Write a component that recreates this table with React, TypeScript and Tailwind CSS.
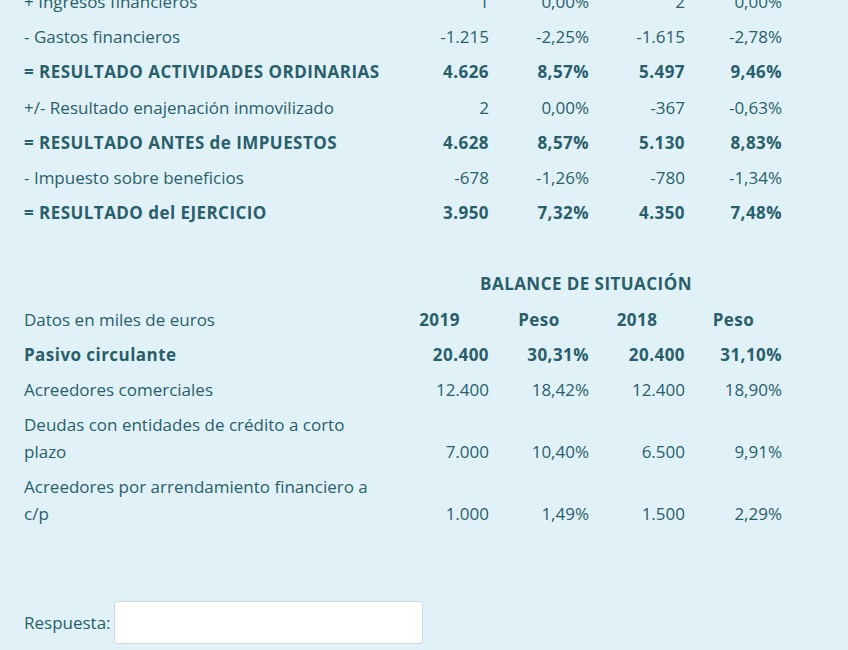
import React from "react";

type Row = { label: React.ReactNode; v: string[]; bold?: boolean };

const top: Row[] = [
  { label: "+ Ingresos financieros", v: ["1", "0,00%", "2", "0,00%"] },
  { label: "- Gastos financieros", v: ["-1.215", "-2,25%", "-1.615", "-2,78%"] },
  { label: "= RESULTADO ACTIVIDADES ORDINARIAS", v: ["4.626", "8,57%", "5.497", "9,46%"], bold: true },
  { label: "+/- Resultado enajenación inmovilizado", v: ["2", "0,00%", "-367", "-0,63%"] },
  { label: "= RESULTADO ANTES de IMPUESTOS", v: ["4.628", "8,57%", "5.130", "8,83%"], bold: true },
  { label: "- Impuesto sobre beneficios", v: ["-678", "-1,26%", "-780", "-1,34%"] },
  { label: "= RESULTADO del EJERCICIO", v: ["3.950", "7,32%", "4.350", "7,48%"], bold: true },
];

const balance: Row[] = [
  { label: "Pasivo circulante", v: ["20.400", "30,31%", "20.400", "31,10%"], bold: true },
  { label: "Acreedores comerciales", v: ["12.400", "18,42%", "12.400", "18,90%"] },
  {
    label: (
      <>
        Deudas con entidades de crédito a corto
        <br />
        plazo
      </>
    ),
    v: ["7.000", "10,40%", "6.500", "9,91%"],
  },
  {
    label: (
      <>
        Acreedores por arrendamiento financiero a
        <br />
        c/p
      </>
    ),
    v: ["1.000", "1,49%", "1.500", "2,29%"],
  },
];

const grid = "grid grid-cols-[366px_99px_100px_96px_97px] items-end";
const B = "font-bold tracking-[0.45px]";

function DataRow({ r }: { r: Row }) {
  return (
    <div className={grid}>
      <div className={`py-[4.1px] whitespace-nowrap ${r.bold ? B : ""}`}>{r.label}</div>
      {r.v.map((x, i) => (
        <div key={i} className={`py-[4.1px] text-right whitespace-nowrap ${r.bold ? B : ""}`}>
          {x}
        </div>
      ))}
    </div>
  );
}

export default function App() {
  return (
    <div
      className="min-h-[650px] w-[848px] overflow-hidden bg-[#e0f2f8] text-[#2a5e6a] text-[17px] leading-[27px]"
      style={{ fontFamily: '"Open Sans", "Noto Sans", sans-serif' }}
    >
      <div className="mt-[-16px] px-[24px]">
        <div className="flex flex-col">
          {top.map((r, i) => (
            <DataRow key={i} r={r} />
          ))}
        </div>
        <div className="mt-[36px] flex flex-col">
          <div className={grid}>
            <div className="py-[4.1px]" />
            <div className={`col-span-4 py-[4.1px] text-center ${B}`}>BALANCE DE SITUACIÓN</div>
          </div>
          <div className={grid}>
            <div className="py-[4.1px]">Datos en miles de euros</div>
            {["2019", "Peso", "2018", "Peso"].map((h, i) => (
              <div key={i} className={`py-[4.1px] text-center ${B}`}>
                {h}
              </div>
            ))}
          </div>
          {balance.map((r, i) => (
            <DataRow key={i} r={r} />
          ))}
        </div>
        <div className="mt-[69.4px] flex items-center">
          <span className="w-[90px] shrink-0">Respuesta:</span>
          <input
            type="text"
            className="h-[43px] w-[309px] rounded-[4px] border border-[#cfd8dc] bg-white px-3 outline-none"
          />
        </div>
      </div>
    </div>
  );
}
